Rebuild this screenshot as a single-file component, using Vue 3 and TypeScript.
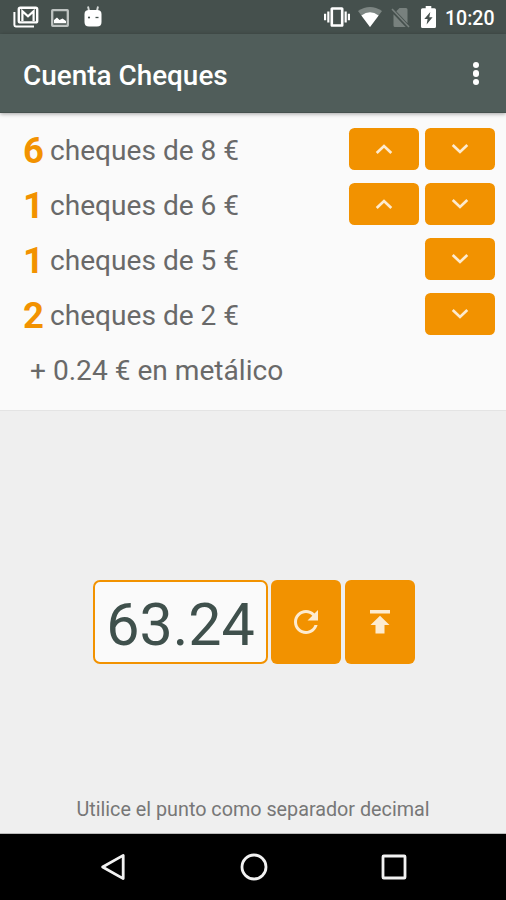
<script setup lang="ts">
import { ref } from 'vue'

interface ChequeRow {
  count: number
  value: number
  canIncrease: boolean
}

const rows = ref<ChequeRow[]>([
  { count: 6, value: 8, canIncrease: true },
  { count: 1, value: 6, canIncrease: true },
  { count: 1, value: 5, canIncrease: false },
  { count: 2, value: 2, canIncrease: false },
])
const amount = ref('63.24')
const cash = ref('0.24')
</script>

<template>
  <div class="screen">
    <div class="status">
      <div class="notifications">
        <svg class="mail" viewBox="0 0 26 22">
          <path d="M1.4 6V19a1.4 1.4 0 0 0 1.4 1.4H21" fill="none" stroke="#fff" stroke-width="2" />
          <rect x="5.8" y="1.8" width="18.4" height="14.6" rx="1.5" fill="none" stroke="#fff" stroke-width="2.4" />
          <path d="M9.4 15V5.2L15 10.2l5.6-5V15" fill="none" stroke="#fff" stroke-width="2.2" />
        </svg>
        <svg class="photo" viewBox="0 0 18 18">
          <rect x="1.2" y="1.2" width="15.6" height="15.6" rx="0.5" fill="none" stroke="#bec3c1" stroke-width="2.3" />
          <path d="M3 14.2V11l3-2.5 2.5 2.5 3-1.5L15 12v2.2z" fill="#fff" />
        </svg>
        <svg class="droid" viewBox="0 0 18 21">
          <path d="M4 0.5l1.2 5M14 0.5l-1.2 5" stroke="#d6dad8" stroke-width="1.9" />
          <path d="M0.5 8Q0.5 4 5 4h8q4.5 0 4.5 4v8q0 4.5-4.5 4.5H5Q0.5 20.500 0.5 16z" fill="#fff" />
          <circle cx="5" cy="11.500" r="1.1" fill="#45504d" />
          <path d="M11.500 11.500h3" stroke="#45504d" stroke-width="1.3" />
        </svg>
      </div>
      <div class="system">
        <svg class="vibrate" viewBox="0 0 24 24">
          <path fill="#fff" d="M0 15h2V9H0v6zm3 2h2V7H3v10zm19-8v6h2V9h-2zm-3 8h2V7h-2v10zM16.5 3h-9C6.67 3 6 3.67 6 4.5v15c0 .83.67 1.5 1.5 1.5h9c.83 0 1.500-.67 1.500-1.500v-15c0-.83-.67-1.500-1.500-1.500zM15.600 18.800H8.400V5.200h7.200v13.600z" />
        </svg>
        <svg class="wifi" viewBox="0 0 24 20">
          <path d="M12 20L0 4Q12-4 24 4z" fill="#7d8683" />
          <path d="M12 20L3.400 8.600Q12 1.800 20.600 8.600z" fill="#fff" />
        </svg>
        <svg class="sim" viewBox="0 0 19 21">
          <path d="M8.500 1H15q1.500 0 1.500 1.500v13.800L5.300 4.200zM2.500 7.200L14.700 20H4q-1.500 0-1.500-1.500z" fill="#78817e" />
          <path d="M1 2l17 18" stroke="#78817e" stroke-width="1.6" />
        </svg>
        <svg class="battery" viewBox="0 0 15 22">
          <path d="M4.700 0h5.600v2.300h3.200Q15 2.300 15 3.800v16.700Q15 22 13.500 22h-12Q0 22 0 20.500V3.800q0-1.500 1.500-1.500h3.200z" fill="#fff" />
          <path d="M9.300 6l-6 7h3.300l-1 5.500 6-7.200H8.300z" fill="#45504d" />
        </svg>
        <span class="time">10:20</span>
      </div>
    </div>

    <header class="toolbar">
      <h1>Cuenta Cheques</h1>
      <button class="overflow" aria-label="Menú"><i></i><i></i><i></i></button>
    </header>

    <section class="results">
      <div v-for="row in rows" :key="row.value" class="row">
        <strong class="count">{{ row.count }}</strong>
        <span class="label">cheques de {{ row.value }} €</span>
        <div class="actions">
          <button v-if="row.canIncrease" class="step">
            <svg viewBox="0 0 18 12"><path d="M1.7 10L9 3l7.3 7" /></svg>
          </button>
          <button class="step">
            <svg viewBox="0 0 18 12"><path d="M1.7 2L9 9l7.3-7" /></svg>
          </button>
        </div>
      </div>
      <div class="row cash"><span class="label">+ {{ cash }} € en metálico</span></div>
    </section>

    <main class="entry">
      <div class="form">
        <div class="amount"><span>{{ amount }}</span></div>
        <button class="action" aria-label="Recalcular">
          <svg class="reload" viewBox="4 4 16 16">
            <path d="M17.65 6.35C16.2 4.9 14.21 4 12 4c-4.42 0-7.99 3.58-7.99 8s3.57 8 7.99 8c3.73 0 6.84-2.55 7.73-6h-2.08c-.82 2.33-3.04 4-5.65 4-3.31 0-6-2.69-6-6s2.69-6 6-6c1.66 0 3.14.69 4.22 1.78L13 11h7V4l-2.35 2.35z" />
          </svg>
        </button>
        <button class="action" aria-label="Subir">
          <svg class="publish" viewBox="0 0 20 24">
            <path d="M0 0h20v3.6H0zM10 5.7l9.5 9.3h-5v8.6h-9V15h-5z" />
          </svg>
        </button>
      </div>
      <p class="hint">Utilice el punto como separador decimal</p>
    </main>

    <nav class="navbar">
      <svg class="back" viewBox="0 0 26 28"><path d="M2.6 14L23.2 2.4v23.2z" /></svg>
      <svg class="home" viewBox="0 0 28 28"><circle cx="14" cy="14" r="12" /></svg>
      <svg class="recent" viewBox="0 0 26 26"><rect x="2" y="2" width="22" height="22" rx="0.8" /></svg>
    </nav>
  </div>
</template>

<style>
body {
  margin: 0;
}
</style>

<style scoped>
* {
  box-sizing: border-box;
}
.screen {
  width: 506px;
  height: 900px;
  display: flex;
  flex-direction: column;
  overflow: hidden;
  background: #efefef;
  font-family: Roboto, sans-serif;
  color: #696969;
}
svg {
  display: block;
  flex: none;
}
button {
  border: 0;
  padding: 0;
  font: inherit;
}
.status {
  height: 34px;
  flex: none;
  display: flex;
  justify-content: space-between;
  align-items: flex-start;
  padding: 0 12px 0 12.5px;
  background: #45504d;
}
.notifications,
.system {
  display: flex;
  align-items: flex-start;
}
.mail { width: 26px; height: 22px; margin-top: 6px; }
.photo { width: 18px; height: 18px; margin: 8.5px 0 0 12px; }
.droid { width: 18px; height: 21px; margin: 5.5px 0 0 15.500px; }
.vibrate { width: 26px; height: 26px; margin-top: 4px; }
.wifi { width: 24px; height: 20px; margin: 7px 0 0 8px; }
.sim { width: 19px; height: 21px; margin: 7px 0 0 9px; }
.battery { width: 15px; height: 22px; margin: 6px 0 0 11.5px; }
.time {
  width: 49px;
  margin-left: 9px;
  line-height: 37px;
  font-size: 19.5px;
  font-weight: 500;
  white-space: nowrap;
  color: #fff;
}
.toolbar {
  height: 79px;
  flex: none;
  display: flex;
  align-items: center;
  justify-content: space-between;
  padding: 0 27px 0 23px;
  background: #505d5a;
  border-bottom: 1px solid #46514e;
  box-shadow: 0 1px 4px rgba(0, 0, 0, 0.35);
  position: relative;
}
h1 {
  margin: 6px 0 0;
  font-size: 27.9px;
  line-height: 34px;
  font-weight: 500;
  color: #fff;
}
.overflow {
  display: flex;
  flex-direction: column;
  gap: 2.1px;
  margin-top: 1px;
  background: none;
}
.overflow i {
  width: 6.4px;
  height: 6.4px;
  border-radius: 50%;
  background: #fff;
}
.results {
  height: 298px;
  flex: none;
  padding: 8px 11px 0 23px;
  background: #fafafa;
  border-bottom: 1px solid #e4e4e4;
}
.row {
  height: 55px;
  display: flex;
  align-items: flex-start;
  white-space: nowrap;
}
.count {
  width: 27px;
  font-size: 36.5px;
  line-height: 59px;
  font-weight: 700;
  color: #f29200;
}
.label {
  font-size: 28.1px;
  line-height: 60px;
}
.actions {
  display: flex;
  gap: 6px;
  margin: 6.6px 0 0 auto;
}
.step {
  width: 70px;
  height: 42px;
  border-radius: 5.5px;
  display: flex;
  align-items: center;
  justify-content: center;
  background: #f29200;
}
.step svg {
  width: 18px;
  height: 12px;
}
.step path {
  fill: none;
  stroke: #fdebcf;
  stroke-width: 2.7;
}
.cash {
  padding-left: 7px;
}
.entry {
  flex: 1;
  min-height: 0;
  display: flex;
  flex-direction: column;
  justify-content: space-between;
  align-items: center;
  padding: 169px 0 9px;
  border-bottom: 1px solid #bbb;
}
.form {
  display: flex;
  gap: 3.5px;
  padding-left: 1px;
}
.amount {
  width: 175px;
  height: 84px;
  border: 2px solid #f29200;
  border-radius: 7px;
  display: flex;
  align-items: center;
  justify-content: center;
  background: #fafafa;
  color: #3f504c;
}
.amount span {
  font-size: 59.2px;
  line-height: 70px;
  padding: 6px 0 0 1px;
}
.action {
  width: 70px;
  height: 84px;
  border-radius: 6px;
  display: flex;
  align-items: center;
  justify-content: center;
  background: #f29200;
}
.action path {
  fill: #fdebcf;
}
.reload { width: 24px; height: 24px; }
.publish { width: 20px; height: 24px; }
.hint {
  margin: 0;
  font-size: 19.75px;
  line-height: 28px;
  color: #777;
}
.navbar {
  height: 66px;
  flex: none;
  display: flex;
  align-items: center;
  justify-content: space-between;
  padding: 0 99px 0 100px;
  background: #000;
}
.navbar svg * {
  fill: none;
  stroke: #f2f2f2;
  stroke-width: 2.8;
  stroke-linejoin: round;
}
.back { width: 26px; height: 28px; }
.home { width: 28px; height: 28px; }
.recent { width: 26px; height: 26px; }
</style>
